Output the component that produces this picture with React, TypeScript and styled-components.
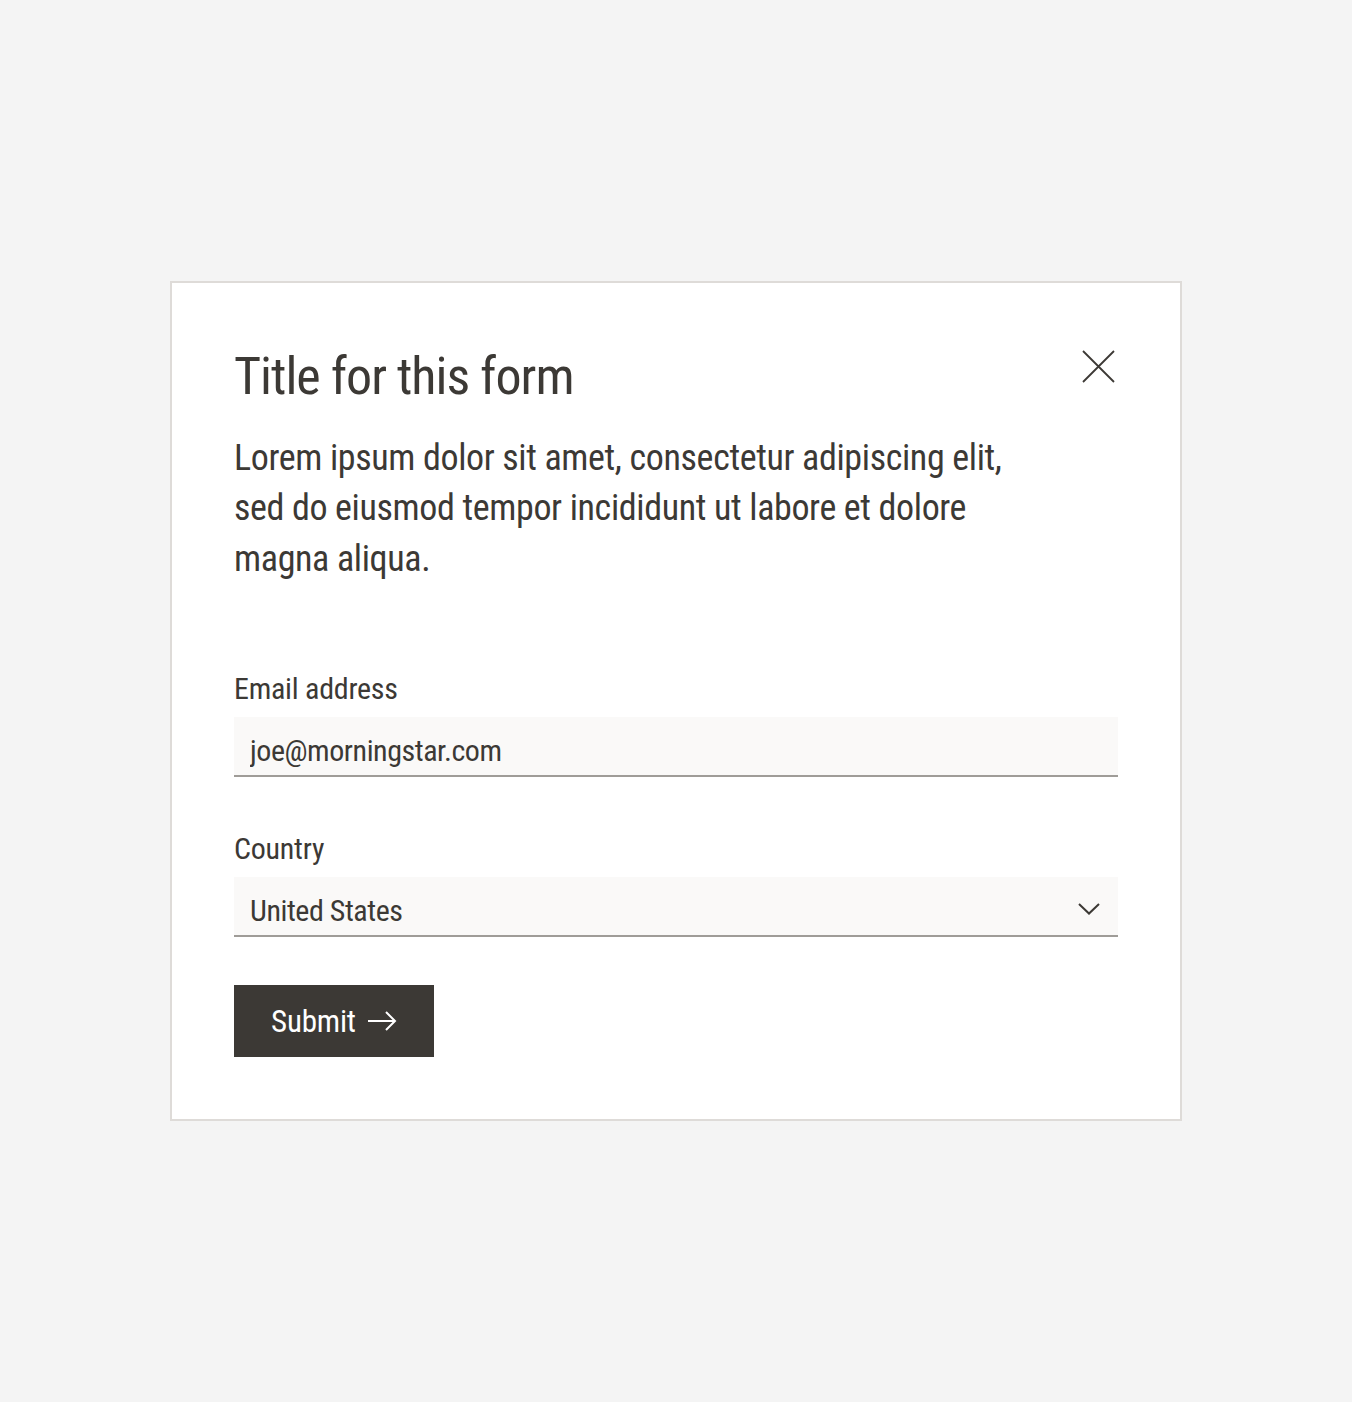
import React from 'react'
import styled, { createGlobalStyle } from 'styled-components'

const GlobalStyle = createGlobalStyle`
  * { box-sizing: border-box; }
  body {
    margin: 0;
    background: #f4f4f4;
    font-family: "Roboto Condensed", "Liberation Sans", sans-serif;
    font-weight: 400;
    color: #3c3935;
  }
`

const Page = styled.main`
  min-height: 100vh;
  display: flex;
  align-items: center;
  justify-content: center;
`

const Card = styled.section`
  width: 1012px;
  background: #fff;
  border: 2px solid #dedbd8;
  padding: 62px;
`

const Header = styled.header`
  display: flex;
  align-items: flex-start;
  justify-content: space-between;
`

const Title = styled.h1`
  margin: 0;
  font-size: 52px;
  line-height: 64px;
  font-weight: 400;
  letter-spacing: -1px;
`

const CloseButton = styled.button`
  width: 40px;
  height: 40px;
  margin-top: 2px;
  padding: 0;
  border: 0;
  background: none;
  color: #3c3935;
  cursor: pointer;
  display: flex;
  align-items: center;
  justify-content: center;
`

const Description = styled.p`
  margin: 24px 0 0;
  max-width: 800px;
  font-size: 36px;
  line-height: 50.4px;
  letter-spacing: -0.36px;
`

const Form = styled.form`
  margin-top: 87px;
  display: flex;
  flex-direction: column;
`

const Field = styled.div`
  display: flex;
  flex-direction: column;
  & + & {
    margin-top: 54px;
  }
`

const Label = styled.label`
  font-size: 30px;
  line-height: 36px;
  letter-spacing: -0.25px;
  margin-bottom: 10px;
`

const inputBase = `
  width: 100%;
  height: 60px;
  margin: 0;
  padding: 8px 16px 0;
  border: 0;
  border-bottom: 2px solid #9f9c98;
  border-radius: 0;
  background: #faf9f8;
  font-family: "Roboto Condensed", "Liberation Sans", sans-serif;
  font-weight: 400;
  font-size: 30px;
  letter-spacing: -0.45px;
  color: #3c3935;
  outline: none;
`

const TextInput = styled.input`
  ${inputBase}
`

const SelectWrap = styled.div`
  position: relative;
`

const Select = styled.select`
  ${inputBase}
  appearance: none;
  padding-right: 56px;
`

const Chevron = styled.svg`
  position: absolute;
  right: 18px;
  top: 26px;
  pointer-events: none;
`

const SubmitButton = styled.button`
  align-self: flex-start;
  margin-top: 48px;
  height: 72px;
  padding: 0 37px;
  display: flex;
  align-items: center;
  gap: 11px;
  border: 0;
  border-radius: 0;
  background: #3c3935;
  color: #fff;
  font-family: "Roboto Condensed", "Liberation Sans", sans-serif;
  font-weight: 400;
  font-size: 31px;
  letter-spacing: -0.2px;
  cursor: pointer;
`

export default function App() {
  return (
    <>
      <GlobalStyle />
      <Page>
        <Card>
          <Header>
            <Title>Title for this form</Title>
            <CloseButton type="button" aria-label="Close">
              <svg width="33" height="33" viewBox="0 0 33 33" fill="none">
                <path d="M1 1 L32 32 M32 1 L1 32" stroke="currentColor" strokeWidth="1.8" />
              </svg>
            </CloseButton>
          </Header>
          <Description>
            Lorem ipsum dolor sit amet, consectetur adipiscing elit, sed do eiusmod tempor incididunt ut labore et dolore magna aliqua.
          </Description>
          <Form onSubmit={e => e.preventDefault()}>
            <Field>
              <Label htmlFor="email">Email address</Label>
              <TextInput id="email" type="email" defaultValue="joe@morningstar.com" />
            </Field>
            <Field>
              <Label htmlFor="country">Country</Label>
              <SelectWrap>
                <Select id="country" defaultValue="us">
                  <option value="us">United States</option>
                  <option value="ca">Canada</option>
                  <option value="uk">United Kingdom</option>
                </Select>
                <Chevron width="22" height="12" viewBox="0 0 22 12" fill="none">
                  <path d="M1 1 L11 10.5 L21 1" stroke="#3c3935" strokeWidth="2" />
                </Chevron>
              </SelectWrap>
            </Field>
            <SubmitButton type="submit">
              Submit
              <svg width="30" height="20" viewBox="0 0 30 20" fill="none">
                <path d="M1 10 H28 M19 1 L28 10 L19 19" stroke="currentColor" strokeWidth="2" />
              </svg>
            </SubmitButton>
          </Form>
        </Card>
      </Page>
    </>
  )
}
